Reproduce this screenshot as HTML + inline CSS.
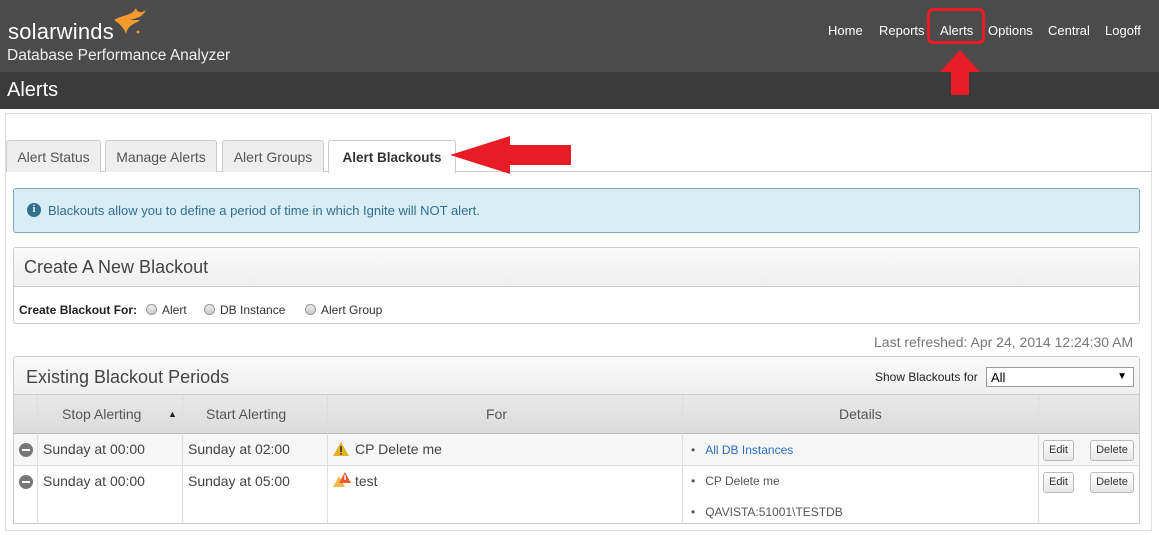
<!DOCTYPE html><html><head><style>
*{box-sizing:border-box;margin:0;padding:0}
body{width:1159px;height:535px;overflow:hidden;background:#fff;font-family:"Liberation Sans",Arial,sans-serif;position:relative}
.a{position:absolute}
.hdr{left:0;top:0;width:1159px;height:72px;background:#4b4b4b}
.sub{left:0;top:72px;width:1159px;height:37px;background:#3b3b3b}
.nav{color:#fff;font-size:13px;top:23px}
.tab{top:140px;height:32px;border:1px solid #ccc;border-bottom:none;background:#eee;border-radius:3px 3px 0 0;color:#555;font-size:14px;padding-top:8px;text-align:center;white-space:nowrap}
.btn{height:21px;border:1px solid #bbb;border-radius:3px;background:linear-gradient(#fff,#e6e6e6);font-size:11px;color:#333;text-align:center;line-height:19px}
.rad{width:11px;height:11px;border:1px solid #999;border-radius:50%;background:linear-gradient(#eee,#ccc);top:304px}
</style></head><body>
<div class="a hdr"></div>
<div class="a" style="left:8px;top:19px;color:#fff;font-size:22px;letter-spacing:0.2px">solarwinds</div>
<svg class="a" style="left:112px;top:6px" width="36" height="30"><path d="M2 14 C12 8 20 10 24 2 C25 8 32 6 34 4 C30 12 24 12 18 14 L28 14 C24 18 16 18 14 28 C12 22 8 18 2 14Z" fill="#f39a2e"/><circle cx="26" cy="26" r="1.5" fill="#f39a2e"/></svg>
<div class="a" style="left:7px;top:47px;color:#eee;font-size:15.5px">Database Performance Analyzer</div>
<div class="a nav" style="left:828px">Home</div>
<div class="a nav" style="left:879px">Reports</div>
<div class="a nav" style="left:940px">Alerts</div>
<div class="a nav" style="left:988px">Options</div>
<div class="a nav" style="left:1048px">Central</div>
<div class="a nav" style="left:1105px">Logoff</div>
<div class="a" style="left:927px;top:8px;width:58px;height:36px;border:3px solid #e81c24;border-radius:6px"></div>
<div class="a sub"></div>
<svg class="a" style="left:938px;top:50px" width="44" height="46"><path d="M22 0 L42 22 L31 22 L31 45 L13 45 L13 22 L2 22Z" fill="#e81c24"/></svg>
<div class="a" style="left:7px;top:79px;color:#fff;font-size:20px">Alerts</div>
<div class="a" style="left:5px;top:113px;width:1147px;height:418px;border:1px solid #ddd"></div>
<div class="a" style="left:6px;top:171px;width:1145px;border-top:1px solid #ccc"></div>
<div class="a tab" style="left:6px;width:95px">Alert Status</div>
<div class="a tab" style="left:105px;width:112px">Manage Alerts</div>
<div class="a tab" style="left:222px;width:102px">Alert Groups</div>
<div class="a tab" style="left:328px;width:128px;background:#fff;height:33px;font-weight:bold;color:#333;font-size:13.5px;padding-top:9px">Alert Blackouts</div>
<svg class="a" style="left:450px;top:136px" width="122" height="38"><path d="M0 19 L60 0 L60 9 L121 9 L121 29 L60 29 L60 38Z" fill="#e81c24"/></svg>
<div class="a" style="left:13px;top:188px;width:1127px;height:45px;background:#d9edf7;border:1px solid #7fa7bd;border-radius:3px"></div>
<div class="a" style="left:27px;top:203px;width:14px;height:14px;border-radius:50%;background:#31708f;color:#fff;font-size:10px;font-weight:bold;text-align:center;line-height:14px;font-family:'Liberation Serif',serif">i</div>
<div class="a" style="left:48px;top:203px;color:#31708f;font-size:13px">Blackouts allow you to define a period of time in which Ignite will NOT alert.</div>
<div class="a" style="left:13px;top:247px;width:1127px;height:77px;border:1px solid #ccc;border-radius:3px"></div>
<div class="a" style="left:14px;top:248px;width:1125px;height:39px;background:linear-gradient(#fafafa,#efefef);border-bottom:1px solid #ccc"></div>
<div class="a" style="left:24px;top:257px;font-size:18px;color:#444">Create A New Blackout</div>
<div class="a" style="left:19px;top:303px;font-size:12px;font-weight:bold;color:#222">Create Blackout For:</div>
<div class="a rad" style="left:146px"></div><div class="a" style="left:162px;top:303px;font-size:12px;color:#333">Alert</div>
<div class="a rad" style="left:204px"></div><div class="a" style="left:220px;top:303px;font-size:12px;color:#333">DB Instance</div>
<div class="a rad" style="left:305px"></div><div class="a" style="left:321px;top:303px;font-size:12px;color:#333">Alert Group</div>
<div class="a" style="left:874px;top:334px;font-size:14px;color:#777">Last refreshed: Apr 24, 2014 12:24:30 AM</div>
<div class="a" style="left:13px;top:356px;width:1127px;height:168px;border:1px solid #ccc;border-radius:3px 3px 0 0"></div>
<div class="a" style="left:14px;top:357px;width:1125px;height:38px;background:linear-gradient(#fafafa,#efefef);border-bottom:1px solid #ccc"></div>
<div class="a" style="left:26px;top:367px;font-size:18px;color:#444">Existing Blackout Periods</div>
<div class="a" style="left:875px;top:370px;font-size:12px;color:#222">Show Blackouts for</div>
<div class="a" style="left:986px;top:367px;width:148px;height:20px;border:1px solid #999;background:#fff;font-size:13px;padding:2px 4px">All<span style="position:absolute;right:6px;top:3px;font-size:10px">▼</span></div>
<div class="a" style="left:14px;top:395px;width:1125px;height:39px;background:linear-gradient(#e8e8e8,#dcdcdc);border-bottom:1px solid #bbb"></div>
<div class="a" style="left:14px;top:434px;width:1125px;height:32px;background:#f6f6f6;border-bottom:1px solid #ddd"></div>
<div class="a" style="left:37px;top:395px;width:1px;height:129px;background:#ddd"></div>
<div class="a" style="left:182px;top:395px;width:1px;height:129px;background:#ddd"></div>
<div class="a" style="left:327px;top:395px;width:1px;height:129px;background:#ddd"></div>
<div class="a" style="left:682px;top:395px;width:1px;height:129px;background:#ddd"></div>
<div class="a" style="left:1038px;top:395px;width:1px;height:129px;background:#ddd"></div>
<div class="a" style="left:62px;top:406px;font-size:14px;color:#555">Stop Alerting</div>
<div class="a" style="left:168px;top:409px;font-size:9px;color:#222">▲</div>
<div class="a" style="left:206px;top:406px;font-size:14px;color:#555">Start Alerting</div>
<div class="a" style="left:486px;top:406px;font-size:14px;color:#555">For</div>
<div class="a" style="left:839px;top:406px;font-size:14px;color:#555">Details</div>
<div class="a" style="left:19px;top:443px;width:14px;height:14px;border-radius:50%;background:#777"><div style="margin:6px 3px;height:2px;background:#fff"></div></div>
<div class="a" style="left:19px;top:475px;width:14px;height:14px;border-radius:50%;background:#777"><div style="margin:6px 3px;height:2px;background:#fff"></div></div>
<div class="a" style="left:43px;top:441px;font-size:14px;color:#444">Sunday at 00:00</div>
<div class="a" style="left:188px;top:441px;font-size:14px;color:#444">Sunday at 02:00</div>
<div class="a" style="left:43px;top:473px;font-size:14px;color:#444">Sunday at 00:00</div>
<div class="a" style="left:188px;top:473px;font-size:14px;color:#444">Sunday at 05:00</div>
<svg class="a" style="left:333px;top:442px" width="16" height="14"><path d="M8 0 L16 14 L0 14Z" fill="#e2b22a"/><rect x="7.2" y="4" width="1.6" height="6" fill="#333"/><rect x="7.2" y="11" width="1.6" height="1.6" fill="#333"/></svg>
<div class="a" style="left:355px;top:441px;font-size:14px;color:#444">CP Delete me</div>
<svg class="a" style="left:333px;top:472px" width="18" height="16"><path d="M6 4 L12 15 L0 15Z" fill="#f2b84a"/><path d="M12 0 L18 11 L6 11Z" fill="#ee5a2e"/><rect x="11.3" y="3" width="1.4" height="5" fill="#fff"/></svg>
<div class="a" style="left:355px;top:473px;font-size:14px;color:#444">test</div>
<div class="a" style="left:691px;top:443px;font-size:12px;color:#555">•&nbsp;&nbsp;&nbsp;<span style="color:#2a6ebb">All DB Instances</span></div>
<div class="a" style="left:691px;top:474px;font-size:12px;color:#555">•&nbsp;&nbsp;&nbsp;CP Delete me</div>
<div class="a" style="left:691px;top:505px;font-size:12px;color:#555">•&nbsp;&nbsp;&nbsp;QAVISTA:51001\TESTDB</div>
<div class="a btn" style="left:1043px;top:440px;width:31px">Edit</div>
<div class="a btn" style="left:1090px;top:440px;width:44px">Delete</div>
<div class="a btn" style="left:1043px;top:472px;width:31px">Edit</div>
<div class="a btn" style="left:1090px;top:472px;width:44px">Delete</div>
</body></html>
